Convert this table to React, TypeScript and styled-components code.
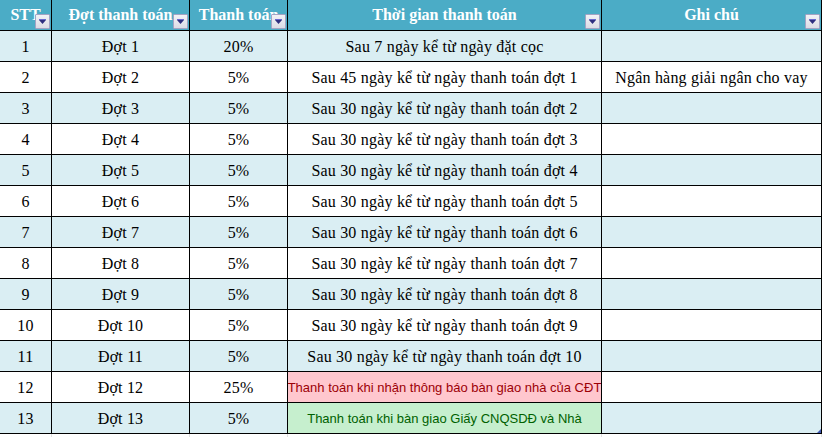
import React from "react";
import styled, { createGlobalStyle } from "styled-components";

const GlobalStyle = createGlobalStyle`
  html, body { margin: 0; padding: 0; background: #ffffff; }
  body { width: 824px; height: 437px; overflow: hidden; }
`;

const COLS = "51px 137px 97px 313px 219px";

const Sheet = styled.div`
  display: flex;
  flex-direction: column;
  width: 824px;
`;

const Table = styled.div`
  position: relative;
  display: grid;
  grid-template-columns: ${COLS};
  grid-auto-rows: 30px;
  gap: 1px;
  background: #000000;
  border-right: 1px solid #000000;
  border-bottom: 1px solid #000000;
  width: max-content;
`;

const Row = styled.div`
  display: contents;
`;

const HeadCell = styled.div`
  position: relative;
  overflow: hidden;
  background: #4bacc6;
  color: #ffffff;
  font-family: "Liberation Serif", "Times New Roman", serif;
  font-weight: bold;
  font-size: 16px;
  line-height: 16px;
  display: flex;
  align-items: center;
  justify-content: center;
  white-space: nowrap;
  padding-bottom: 1px;
`;

const FilterButton = styled.div`
  position: absolute;
  right: 1px;
  bottom: 1px;
  width: 13px;
  height: 13px;
  border: 1px solid #a3a3c4;
  border-radius: 1px;
  background: linear-gradient(#f2f2f6, #dcdce6);
  display: flex;
  align-items: center;
  justify-content: center;
`;

const Cell = styled.div<{ $bg: string; $color?: string; $sans?: boolean }>`
  background: ${(p) => p.$bg};
  color: ${(p) => p.$color || "#000000"};
  font-family: ${(p) =>
    p.$sans
      ? '"Liberation Sans", Arial, sans-serif'
      : '"Liberation Serif", "Times New Roman", serif'};
  font-size: ${(p) => (p.$sans ? "13px" : "16px")};
  letter-spacing: ${(p) => (p.$sans ? "0" : "0.2px")};
  line-height: 16px;
  display: flex;
  align-items: center;
  justify-content: center;
  white-space: nowrap;
  overflow: hidden;
  padding-top: ${(p) => (p.$sans ? "2px" : "1px")};
`;

const ResizeHandle = styled.div`
  position: absolute;
  right: 0;
  bottom: 0;
  width: 0;
  height: 0;
  border-left: 4px solid transparent;
  border-bottom: 4px solid #3f57b0;
`;

const Strip = styled.div`
  display: grid;
  grid-template-columns: ${COLS} 1px;
  gap: 1px;
  height: 4px;
  background: #e0e0e0;
  width: max-content;
`;

const StripCell = styled.div`
  background: #ffffff;
`;

const Arrow = () => (
  <svg width="9" height="6" viewBox="0 0 9 6">
    <rect x="1" y="0" width="7" height="1" fill="#6a6ad0" />
    <polygon points="1,1 8,1 4.5,5" fill="#2e2e80" />
  </svg>
);

const headers = ["STT", "Đợt thanh toán", "Thanh toán", "Thời gian thanh toán", "Ghi chú"];

type RowData = {
  pct: string;
  time: string;
  note?: string;
  special?: "bad" | "good";
};

const rows: RowData[] = [
  { pct: "20%", time: "Sau 7 ngày kể từ ngày đặt cọc" },
  { pct: "5%", time: "Sau 45 ngày kể từ ngày thanh toán đợt 1", note: "Ngân hàng giải ngân cho vay" },
  { pct: "5%", time: "Sau 30 ngày kể từ ngày thanh toán đợt 2" },
  { pct: "5%", time: "Sau 30 ngày kể từ ngày thanh toán đợt 3" },
  { pct: "5%", time: "Sau 30 ngày kể từ ngày thanh toán đợt 4" },
  { pct: "5%", time: "Sau 30 ngày kể từ ngày thanh toán đợt 5" },
  { pct: "5%", time: "Sau 30 ngày kể từ ngày thanh toán đợt 6" },
  { pct: "5%", time: "Sau 30 ngày kể từ ngày thanh toán đợt 7" },
  { pct: "5%", time: "Sau 30 ngày kể từ ngày thanh toán đợt 8" },
  { pct: "5%", time: "Sau 30 ngày kể từ ngày thanh toán đợt 9" },
  { pct: "5%", time: "Sau 30 ngày kể từ ngày thanh toán đợt 10" },
  { pct: "25%", time: "Thanh toán khi nhận thông báo bàn giao nhà của CĐT", special: "bad" },
  { pct: "5%", time: "Thanh toán khi bàn giao Giấy CNQSDĐ và Nhà", special: "good" },
];

export default function App() {
  return (
    <>
      <GlobalStyle />
      <Sheet>
        <Table>
          <Row>
            {headers.map((h) => (
              <HeadCell key={h}>
                {h}
                <FilterButton>
                  <Arrow />
                </FilterButton>
              </HeadCell>
            ))}
          </Row>
          {rows.map((r, i) => {
            const bg = i % 2 === 0 ? "#daeef3" : "#ffffff";
            const timeBg = r.special === "bad" ? "#ffc7ce" : r.special === "good" ? "#c6efce" : bg;
            const timeColor = r.special === "bad" ? "#9c0006" : r.special === "good" ? "#006100" : undefined;
            return (
              <Row key={i}>
                <Cell $bg={bg}>{i + 1}</Cell>
                <Cell $bg={bg}>Đợt {i + 1}</Cell>
                <Cell $bg={bg}>{r.pct}</Cell>
                <Cell $bg={timeBg} $color={timeColor} $sans={!!r.special}>
                  {r.time}
                </Cell>
                <Cell $bg={bg}>{r.note || ""}</Cell>
              </Row>
            );
          })}
          <ResizeHandle />
        </Table>
        <Strip>
          <StripCell />
          <StripCell />
          <StripCell />
          <StripCell />
          <StripCell />
          <StripCell />
        </Strip>
      </Sheet>
    </>
  );
}
